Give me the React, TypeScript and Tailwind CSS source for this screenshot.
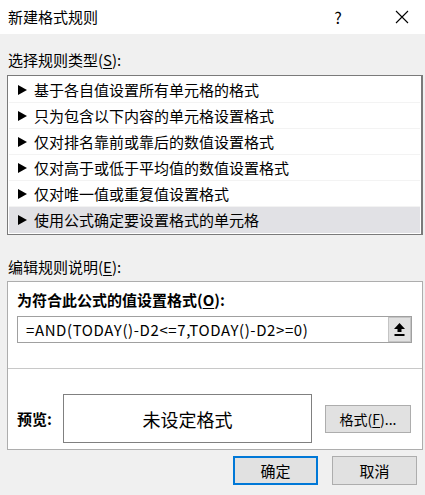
import React from 'react';

const font = { fontFamily: '"Noto Sans CJK SC", "Noto Sans", sans-serif' };

const rules = [
  '基于各自值设置所有单元格的格式',
  '只为包含以下内容的单元格设置格式',
  '仅对排名靠前或靠后的数值设置格式',
  '仅对高于或低于平均值的数值设置格式',
  '仅对唯一值或重复值设置格式',
  '使用公式确定要设置格式的单元格',
];

const Arrow: React.FC = () => (
  <svg width="9" height="10" viewBox="0 0 9 10" className="shrink-0">
    <polygon points="0,0 9,5 0,10" fill="#000" />
  </svg>
);

const App: React.FC = () => {
  return (
    <div
      className="w-[425px] h-[495px] overflow-hidden bg-[#f0f0f0] text-black flex flex-col"
      style={font}
    >
      {/* Title bar */}
      <div className="h-[34px] bg-white flex items-center pl-[8px] shrink-0">
        <span className="text-[15px] leading-[20px] flex-1">新建格式规则</span>
        <span className="text-[16px] leading-[20px] w-[14px] text-center mr-[50px]">?</span>
        <svg width="14" height="14" viewBox="0 0 14 14" className="mr-[16px]">
          <path d="M1 1 L13 13 M13 1 L1 13" stroke="#000" strokeWidth="1.1" />
        </svg>
      </div>

      <div className="pl-[7px] pr-[2px] flex flex-col">
        <div className="text-[15px] leading-[20px] pl-[1px] mt-[16px] mb-[5px]">
          选择规则类型(<span className="underline underline-offset-2">S</span>):
        </div>

        {/* Rule type list */}
        <div className="bg-white border border-[#7a7a7a] border-r-2 py-[1px] px-[1px] flex flex-col">
          {rules.map((r, i) => (
            <div
              key={i}
              className={`h-[26px] flex items-center gap-[7px] pl-[9px] text-[15px] leading-[20px] ${
                i === rules.length - 1 ? 'bg-[#e1e1e5]' : 'border-b border-[#f3f3f3]'
              }`}
            >
              <Arrow />
              <span>{r}</span>
            </div>
          ))}
        </div>

        <div className="text-[15px] leading-[20px] pl-[1px] mt-[22px] mb-[4px]">
          编辑规则说明(<span className="underline underline-offset-2">E</span>):
        </div>

        {/* Rule description group */}
        <div className="bg-white border border-[#adadad] flex flex-col">
          <div className="px-[9px] pt-[8px]">
            <div className="text-[15px] leading-[20px] font-bold">
              为符合此公式的值设置格式(<span className="underline underline-offset-2">O</span>):
            </div>
            <div className="mt-[6px] mr-[1px] h-[27px] border border-[#a0a0a0] flex items-center">
              <div className="flex-1 pl-[8px] text-[15px] leading-[20px] tracking-[0.6px] whitespace-nowrap overflow-hidden">
                =AND(TODAY()-D2&lt;=7,TODAY()-D2&gt;=0)
              </div>
              <div className="w-[23px] h-[25px] bg-[#e1e1e1] border border-[#c4c4c4] flex items-center justify-center">
                <svg width="11" height="13" viewBox="0 0 11 13">
                  <polygon points="5.5,0 11,6 7.5,6 7.5,9 3.5,9 3.5,6 0,6" fill="#000" />
                  <rect x="0.5" y="11" width="10" height="2" fill="#000" />
                </svg>
              </div>
            </div>
          </div>

          <div className="mt-[25px] border-t border-[#c8c8c8]" />

          <div className="flex items-center pl-[9px] pr-[11px] pt-[25px] pb-[6px]">
            <span className="w-[46px] text-[15px] leading-[20px] font-bold">预览:</span>
            <div className="w-[249px] h-[49px] border border-[#808080] flex items-center justify-center text-[18px] leading-[24px]">
              未设定格式
            </div>
            <div className="flex-1" />
            <button className="w-[86px] h-[28px] bg-[#e1e1e1] border border-[#adadad] text-[14px] leading-[20px]">
              格式(<span className="underline underline-offset-2">F</span>)...
            </button>
          </div>
        </div>

        {/* Dialog buttons */}
        <div className="flex justify-end gap-[14px] mt-[6px] pr-[6px]">
          <button className="w-[85px] h-[29px] bg-[#e1e1e1] border-2 border-[#0078d7] text-[15px] leading-[20px]">
            确定
          </button>
          <button className="w-[85px] h-[29px] bg-[#e1e1e1] border border-[#adadad] text-[15px] leading-[20px]">
            取消
          </button>
        </div>
      </div>
    </div>
  );
};

export default App;
